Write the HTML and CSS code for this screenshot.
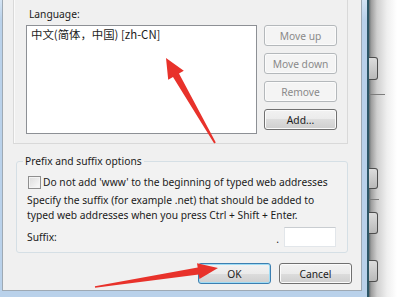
FILE: index.html
```html
<!DOCTYPE html>
<html lang="en">
<head>
  <meta charset="UTF-8" />
  <title>Language Preference</title>
  <link rel="stylesheet" href="styles.css">
</head>
<body>
  <div class="screen">
    <div class="window">
      <div class="dialog">

        <div class="panel">
          <div class="label">Language:</div>
          <div class="lang-row">
            <div class="listbox">
              <div class="list-item">中文(简体，中国) [zh-CN]</div>
            </div>
            <div class="side-buttons">
              <button class="btn" disabled>Move up</button>
              <button class="btn" disabled>Move down</button>
              <button class="btn" disabled>Remove</button>
              <button class="btn">Add...</button>
            </div>
          </div>
        </div>

        <fieldset class="group">
          <legend>Prefix and suffix options</legend>
          <label class="check-row"><span class="checkbox"></span>Do not add 'www' to the beginning of typed web addresses</label>
          <p class="hint">Specify the suffix (for example .net) that should be added to typed web addresses when you press Ctrl + Shift + Enter.</p>
          <div class="suffix-row">
            <span>Suffix:</span>
            <span class="dot">.</span>
            <span class="textbox"></span>
          </div>
        </fieldset>

        <div class="footer">
          <button class="btn default">OK</button>
          <button class="btn">Cancel</button>
        </div>

      </div>
    </div>

    <!-- window behind the dialog -->
    <div class="behind">
      <span class="frag frag-a"></span>
      <span class="rule rule-a"></span>
      <span class="frag frag-b"></span>
      <span class="rule rule-b"></span>
      <span class="frag frag-c"></span>
      <span class="frag frag-d"></span>
    </div>

    <!-- red annotation arrows -->
    <svg class="arrows" width="404" height="297" viewBox="0 0 404 297">
      <polygon points="166,58 183.8,70.8 179,73.6 215.8,142.5 214.2,143.5 173,77.1 168.2,79.8" />
      <polygon points="218,268 199.4,279 198.7,274.6 95.1,287.8 94.9,286.2 197.7,267.6 197,263.2" />
    </svg>
  </div>
</body>
</html>
```

FILE: styles.css
```css
    body {
      margin: 0;
      padding: 0;
      background: #fff;
      font-family: 'Noto Sans', 'Liberation Sans', 'Noto Sans CJK SC', sans-serif;
      font-size: 10.25px;
      color: #1b1b1b;
    }

    .screen {
      position: relative;
      display: flex;
      width: 404px;
      height: 297px;
      overflow: hidden;
    }

    /* window frame round the dialog */
    .window {
      display: flex;
      flex-direction: column;
      width: 369px;
      height: 297px;
      box-sizing: border-box;
      padding: 0 5px 6px 2px;
      background: linear-gradient(#d3e3f3, #b9d1ea 20px);
      border-right: 2px solid #2c5666;
    }

    .dialog {
      flex: 1;
      display: flex;
      flex-direction: column;
      background: #f0f0f0;
      border: 1px solid #9ea9b3;
      border-top: none;
    }

    .panel {
      width: 335px;
      box-sizing: border-box;
      margin: -4px 0 0 10px;
      padding: 10px 10px 9px 12px;
      border: 1px solid #d9d9d9;
      box-shadow: inset 1px 1px 0 #fafafa;
    }

    .label {
      line-height: 15px;
      margin: 0 0 3px 3px;
    }

    .lang-row {
      display: flex;
      gap: 7px;
    }

    .listbox {
      width: 231px;
      height: 109px;
      box-sizing: border-box;
      background: #fff;
      border: 1px solid #8d9095;
      padding: 1px 4px;
    }

    .list-item {
      font-family: 'Noto Sans CJK SC', sans-serif;
      font-size: 11.4px;
      line-height: 15px;
    }

    .side-buttons {
      display: flex;
      flex-direction: column;
      gap: 7px;
    }

    .btn {
      width: 73px;
      height: 21px;
      padding: 0;
      font: inherit;
      color: #1b1b1b;
      border: 1px solid #707070;
      border-radius: 3px;
      background: linear-gradient(#f2f2f2 0, #ebebeb 50%, #dddddd 50%, #cfcfcf 100%);
      box-shadow: inset 0 0 0 1px #fbfbfb;
    }

    .btn:disabled {
      color: #8a8a8a;
      border-color: #b4b8bb;
      background: #f4f4f4;
    }

    .btn.default {
      border-color: #3c7fb1;
      box-shadow: inset 0 0 0 1px #9fdcf5;
    }

    .group {
      width: 332px;
      box-sizing: border-box;
      margin: 10px 0 0 13px;
      padding: 0 11px 5px 10px;
      border: 1px solid #d5dfe5;
      border-radius: 3px;
      background: #f2f2f2;
    }

    .group legend {
      padding: 0 2px;
      margin-left: -4px;
      line-height: 15px;
    }

    .check-row {
      display: flex;
      align-items: center;
      gap: 2px;
      margin: 6px 0 0 1px;
      line-height: 15px;
    }

    .checkbox {
      width: 13px;
      height: 13px;
      box-sizing: border-box;
      border: 1px solid #8f8f8f;
      background: linear-gradient(135deg, #dcdcdc, #fbfbfb);
      box-shadow: inset 0 0 0 1px #f4f4f4;
    }

    .hint {
      margin: 3px 0 0;
      line-height: 15px;
    }

    .suffix-row {
      display: flex;
      align-items: center;
      margin-top: 4px;
      line-height: 15px;
    }

    .suffix-row .dot {
      margin: 5px 5px 0 auto;
    }

    .textbox {
      width: 52px;
      height: 20px;
      box-sizing: border-box;
      background: #fff;
      border: 1px solid #e2e6ea;
      border-top-color: #c9cdd1;
    }

    .footer {
      display: flex;
      justify-content: flex-end;
      gap: 8px;
      margin: 10px 9px 0 0;
    }

    /* strip of the window behind */
    .behind {
      flex: 1;
      display: flex;
      flex-direction: column;
      background: linear-gradient(to right, #5e6a6e 0, #9b9b9b 2px, #cfcfcf 8px, #efefef 18px, #fff 28px);
    }

    .frag {
      display: block;
      width: 8px;
      height: 21px;
      border: 1px solid #4d4d4d;
      border-left: none;
      border-radius: 0 3px 3px 0;
      background: linear-gradient(#dcdcdc, #b9b9b9);
    }

    .rule {
      display: block;
      height: 1px;
      background: #7c7c7c;
    }

    .frag-a { margin-top: 57px; }
    .rule-a { margin-top: 14px; width: 16px; }
    .frag-b { margin-top: 73px; height: 19px; }
    .rule-b { margin-top: 10px; width: 10px; }
    .frag-c { margin-top: 12px; height: 20px; }
    .frag-d { margin-top: 26px; height: 20px; }

    .arrows {
      position: absolute;
      top: 0;
      left: 0;
      pointer-events: none;
    }

    .arrows polygon {
      fill: #e8322b;
    }
```
